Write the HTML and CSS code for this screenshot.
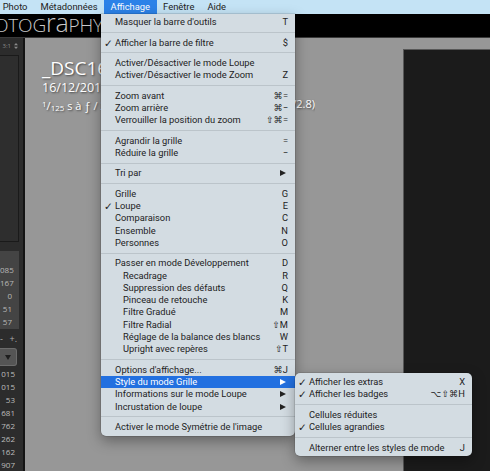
FILE: index.html
```html
<!DOCTYPE html>
<html lang="fr">
<head>
<meta charset="utf-8">
<title>Affichage</title>
<link rel="stylesheet" href="styles.css">
</head>
<body>
<div class="menubar">
  <span class="mi first">Photo</span>
  <span class="mi">Métadonnées</span>
  <span class="mi active">Affichage</span>
  <span class="mi">Fenêtre</span>
  <span class="mi">Aide</span>
</div>
<div class="topband"><span class="plate">OTOG<span class="lc">ra</span>PHY</span></div>
<div class="workspace">
  <aside class="leftpanel">
    <div class="lp-head"><span>3:1</span><svg class="stepper" width="4" height="6" viewBox="0 0 4 6"><path d="M0 2.3 L2 0 L4 2.3Z M0 3.7 L2 6 L4 3.7Z" fill="#8a8a8a"/></svg></div>
    <div class="lp-box"></div>
    <div class="lp-vals">
      <div>085</div><div>167</div><div>0</div><div>51</div><div>57</div>
    </div>
    <div class="lp-tools"><span>-</span><span>+.</span></div>
    <div class="lp-drop"><span class="tri"></span></div>
    <div class="lp-list">
      <div>015</div><div>015</div><div>53</div><div>681</div><div>762</div><div>262</div><div>162</div><div>907</div>
    </div>
  </aside>
  <main class="center">
    <div class="info">
      <div class="title">_DSC1634.NEF</div>
      <div class="date">16/12/2016 14:32:08</div>
      <div class="expo"><span><sup>1</sup>/<sub>125</sub> s à ƒ / 2,8 à ISO 100</span><span>(24-70 mm f/2.8)</span></div>
    </div>
    <div class="imagepanel"></div>
  </main>
</div>

<div class="menu">
  <div class="row"><span class="chk"></span><span class="lbl">Masquer la barre d'outils</span><span class="key">T</span></div>
  <div class="sep"></div>
  <div class="row"><span class="chk">✓</span><span class="lbl">Afficher la barre de filtre</span><span class="key">$</span></div>
  <div class="sep"></div>
  <div class="row"><span class="chk"></span><span class="lbl">Activer/Désactiver le mode Loupe</span><span class="key"></span></div>
  <div class="row"><span class="chk"></span><span class="lbl">Activer/Désactiver le mode Zoom</span><span class="key">Z</span></div>
  <div class="sep"></div>
  <div class="row"><span class="chk"></span><span class="lbl">Zoom avant</span><span class="key">⌘=</span></div>
  <div class="row"><span class="chk"></span><span class="lbl">Zoom arrière</span><span class="key">⌘−</span></div>
  <div class="row"><span class="chk"></span><span class="lbl">Verrouiller la position du zoom</span><span class="key">⇧⌘=</span></div>
  <div class="sep"></div>
  <div class="row"><span class="chk"></span><span class="lbl">Agrandir la grille</span><span class="key">=</span></div>
  <div class="row"><span class="chk"></span><span class="lbl">Réduire la grille</span><span class="key">−</span></div>
  <div class="sep"></div>
  <div class="row"><span class="chk"></span><span class="lbl">Tri par</span><span class="arrow"></span></div>
  <div class="sep"></div>
  <div class="row"><span class="chk"></span><span class="lbl">Grille</span><span class="key">G</span></div>
  <div class="row"><span class="chk">✓</span><span class="lbl">Loupe</span><span class="key">E</span></div>
  <div class="row"><span class="chk"></span><span class="lbl">Comparaison</span><span class="key">C</span></div>
  <div class="row"><span class="chk"></span><span class="lbl">Ensemble</span><span class="key">N</span></div>
  <div class="row"><span class="chk"></span><span class="lbl">Personnes</span><span class="key">O</span></div>
  <div class="sep"></div>
  <div class="row"><span class="chk"></span><span class="lbl">Passer en mode Développement</span><span class="key">D</span></div>
  <div class="row ind"><span class="chk"></span><span class="lbl">Recadrage</span><span class="key">R</span></div>
  <div class="row ind"><span class="chk"></span><span class="lbl">Suppression des défauts</span><span class="key">Q</span></div>
  <div class="row ind"><span class="chk"></span><span class="lbl">Pinceau de retouche</span><span class="key">K</span></div>
  <div class="row ind"><span class="chk"></span><span class="lbl">Filtre Gradué</span><span class="key">M</span></div>
  <div class="row ind"><span class="chk"></span><span class="lbl">Filtre Radial</span><span class="key">⇧M</span></div>
  <div class="row ind"><span class="chk"></span><span class="lbl">Réglage de la balance des blancs</span><span class="key">W</span></div>
  <div class="row ind"><span class="chk"></span><span class="lbl">Upright avec repères</span><span class="key">⇧T</span></div>
  <div class="sep"></div>
  <div class="row"><span class="chk"></span><span class="lbl">Options d'affichage...</span><span class="key">⌘J</span></div>
  <div class="row hl"><span class="chk"></span><span class="lbl">Style du mode Grille</span><span class="arrow"></span></div>
  <div class="row"><span class="chk"></span><span class="lbl">Informations sur le mode Loupe</span><span class="arrow"></span></div>
  <div class="row"><span class="chk"></span><span class="lbl">Incrustation de loupe</span><span class="arrow"></span></div>
  <div class="sep"></div>
  <div class="row"><span class="chk"></span><span class="lbl">Activer le mode Symétrie de l'image</span><span class="key"></span></div>
</div>

<div class="menu submenu">
  <div class="row"><span class="chk">✓</span><span class="lbl">Afficher les extras</span><span class="key">X</span></div>
  <div class="row"><span class="chk">✓</span><span class="lbl">Afficher les badges</span><span class="key">⌥⇧⌘H</span></div>
  <div class="sep"></div>
  <div class="row"><span class="chk"></span><span class="lbl">Cellules réduites</span><span class="key"></span></div>
  <div class="row"><span class="chk">✓</span><span class="lbl">Cellules agrandies</span><span class="key"></span></div>
  <div class="sep"></div>
  <div class="row"><span class="chk"></span><span class="lbl">Alterner entre les styles de mode</span><span class="key">J</span></div>
</div>
</body>
</html>
```

FILE: styles.css
```css
* { box-sizing: border-box; }
html, body { margin: 0; padding: 0; }
body {
  width: 490px;
  height: 471px;
  overflow: hidden;
  position: relative;
  background: #979797;
  font-family: Roboto, "Noto Sans", sans-serif;
}

/* top menu bar */
.menubar {
  height: 14px;
  background: #c4e3f5;
  display: flex;
  align-items: center;
  font-family: Roboto, sans-serif;
  font-size: 9.4px;
  color: #222;
  white-space: nowrap;
}
.menubar .mi { padding: 0 6.5px; height: 14px; line-height: 14px; }
.menubar .mi.first { margin-left: -3.8px; }
.menubar .mi.active { background: #2b82e8; color: #fff; }

/* identity plate band */
.topband {
  height: 24px;
  background: #000;
  border-bottom: 1px solid #3a3a3a;
  overflow: hidden;
  white-space: nowrap;
}
.plate {
  display: inline-block;
  font-family: "Open Sans", sans-serif;
  font-weight: 300;
  font-size: 19px;
  line-height: 23px;
  color: #c9c9c9;
  margin-left: -6px;
  letter-spacing: -0.2px;
}
.plate .lc { font-size: 25px; line-height: 10px; }

.workspace { display: flex; height: 433px; }

/* left panel */
.leftpanel {
  width: 25px;
  flex: none;
  background: #2c2c2c;
  border-right: 2px solid #141414;
  display: flex;
  flex-direction: column;
  overflow: hidden;
  font-family: "Open Sans", sans-serif;
}
.lp-head {
  height: 17px;
  display: flex;
  align-items: center;
  justify-content: flex-end;
  gap: 3px;
  padding-right: 5px;
  font-size: 6px;
  color: #8a8a8a;
}
.lp-box {
  height: 190px;
  margin-right: 4px;
  background: #2e2e2e;
  border: 1px solid #1a1a1a;
  border-left: none;
}
.lp-vals {
  margin-top: 9px;
  height: 79px;
  margin-right: 4px;
  background: #444;
  padding: 12px 7px 0 0;
  font-size: 8px;
  line-height: 13px;
  color: #b8b8b8;
  text-align: right;
}
.lp-tools {
  height: 18px;
  display: flex;
  justify-content: space-between;
  align-items: center;
  padding: 0 6px 0 0;
  font-size: 9px;
  color: #aaa;
}
.lp-drop {
  margin-top: 1px;
  height: 18px;
  width: 17px;
  background: #555;
  border: 1px solid #6c6c6c;
  border-left: none;
  border-radius: 0 3px 3px 0;
  display: flex;
  align-items: center;
  justify-content: flex-end;
  padding-right: 5px;
}
.tri {
  width: 0; height: 0;
  border-top: 5px solid #1e1e1e;
  border-left: 3px solid transparent;
  border-right: 3px solid transparent;
}
.lp-list {
  padding: 1px 8px 0 0;
  font-size: 8px;
  line-height: 13px;
  color: #bcbcbc;
  text-align: right;
}

/* center area */
.center {
  flex: 1;
  display: flex;
  background: #979797;
  overflow: hidden;
}
.info {
  width: 378px;
  flex: none;
  padding: 18px 0 0 17px;
  color: #fff;
  font-family: "Open Sans", sans-serif;
  text-shadow: 1px 1px 2px rgba(0,0,0,0.55);
  white-space: nowrap;
  overflow: hidden;
}
.title { font-size: 19px; line-height: 24px; }
.date { font-size: 12.5px; line-height: 16px; }
.expo {
  font-size: 11px;
  line-height: 16px;
  width: 273px;
  display: flex;
  justify-content: space-between;
  overflow: hidden;
}
.expo sup { font-size: 8px; vertical-align: 3px; }
.expo sub { font-size: 8px; vertical-align: -1px; }
.imagepanel {
  flex: 1;
  margin-top: 11px;
  background: #1b1b1b;
  border-top: 1px solid #585858;
  border-left: 1px solid #585858;
}

/* dropdown menu */
.menu {
  position: absolute;
  left: 101px;
  top: 14px;
  width: 194px;
  background: #d3dce2;
  padding: 2px 0 3px;
  border-radius: 0 0 5px 5px;
  box-shadow: 0 5px 14px rgba(0,0,0,0.35), 0 0 0 0.5px rgba(0,0,0,0.2);
  font-family: Roboto, "Noto Sans", sans-serif;
  font-size: 9.3px;
  color: #222;
}
.submenu {
  left: 295px;
  top: 373px;
  width: 177px;
  padding: 3px 0 2px;
  border-radius: 5px;
}
.row {
  display: flex;
  align-items: center;
  height: 12.3px;
  line-height: 12px;
  padding: 0 7px 0 3px;
  white-space: nowrap;
}
.chk { width: 11px; flex: none; font-family: "DejaVu Sans", sans-serif; font-size: 10.5px; font-weight: bold; }
.lbl { flex: 1; }
.key { text-align: right; font-family: Roboto, "DejaVu Sans", sans-serif; font-size: 9.3px; }
.row.ind .lbl { padding-left: 8px; }
.row.hl { background: #2270e0; color: #fff; }
.sep { height: 1px; background: #bbc4ca; margin: 3.55px 0; }
.arrow {
  width: 0; height: 0;
  border-left: 6px solid currentColor;
  border-top: 3.5px solid transparent;
  border-bottom: 3.5px solid transparent;
  margin-right: 2px;
}
```
